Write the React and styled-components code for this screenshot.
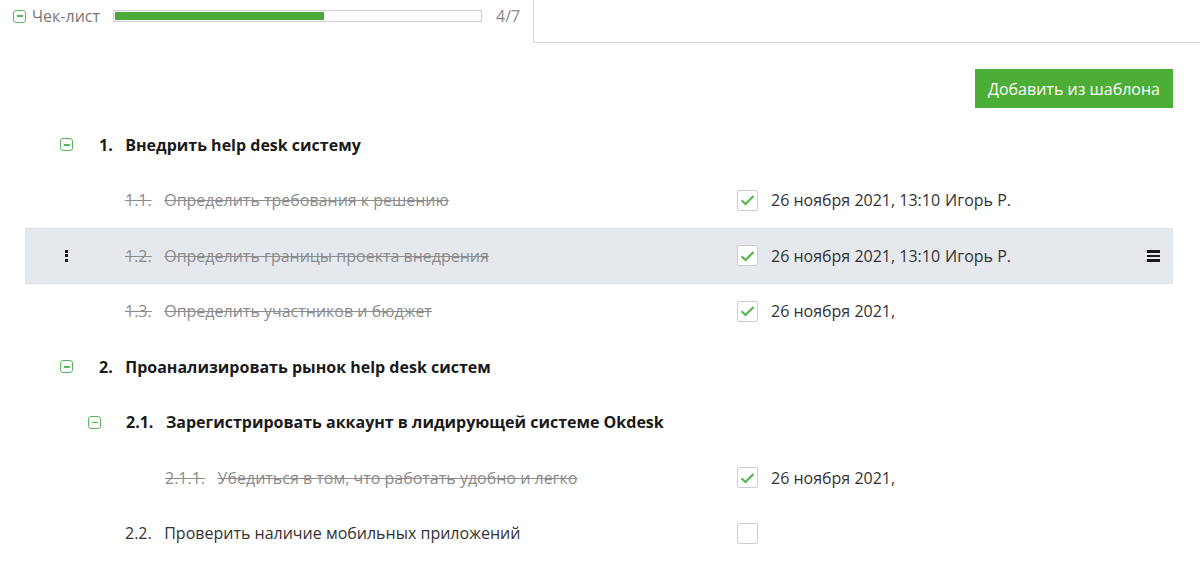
import React from 'react';
import styled, { createGlobalStyle } from 'styled-components';

const GlobalStyle = createGlobalStyle`
  html, body {
    margin: 0;
    padding: 0;
    background: #fff;
  }
  body {
    font-family: "Open Sans", "Liberation Sans", sans-serif;
    color: #333;
  }
`;

const Page = styled.div`
  width: 1200px;
  height: 566px;
  overflow: hidden;
`;

const Header = styled.div`
  display: flex;
  align-items: flex-start;
`;

const HeaderMain = styled.div`
  width: 533px;
  box-sizing: border-box;
  display: flex;
  align-items: center;
  padding: 8px 0 0 13px;
`;

const HeaderTab = styled.div`
  flex: 1;
  height: 42px;
  border-left: 1px solid #d3d9e2;
  border-bottom: 1px solid #d3d9e2;
`;

const Toggle = styled.span`
  width: 13px;
  height: 13px;
  box-sizing: border-box;
  border: 1.5px solid #5cb85c;
  border-radius: 3px;
  display: inline-flex;
  align-items: center;
  justify-content: center;
  flex-shrink: 0;
  margin-right: ${p => p.$gap || 26}px;

  &::after {
    content: '';
    width: 6px;
    height: 1.5px;
    background: #5cb85c;
  }
`;

const Label = styled.span`
  width: 81px;
  font-size: 16px;
  color: #777;
  line-height: 16px;
`;

const Progress = styled.div`
  width: 369px;
  height: 12px;
  box-sizing: border-box;
  border: 1px solid #c9cfd8;
  background: #fff;
  padding: 1px;
`;

const ProgressFill = styled.div`
  height: 100%;
  background: #4aaa36;
`;

const Count = styled.span`
  margin-left: 14px;
  font-size: 16px;
  color: #888;
  line-height: 16px;
`;

const Content = styled.div`
  padding: 0 27px 0 25px;
`;

const Toolbar = styled.div`
  display: flex;
  justify-content: flex-end;
  margin: 26px 0 9px;
`;

const Button = styled.button`
  width: 198px;
  height: 39px;
  border: none;
  background: #4cae36;
  color: #fff;
  font-family: "Open Sans", "Liberation Sans", sans-serif;
  font-size: 16px;
  padding: 0;
  cursor: pointer;
`;

const Row = styled.div`
  position: relative;
  height: 55.5px;
  box-sizing: border-box;
  display: grid;
  grid-template-columns: 712px 1fr 40px;
  align-items: center;
  background: ${p => (p.$active ? '#e5e8ed' : 'transparent')};
  box-shadow: ${p => (p.$active ? 'inset 0 1px 0 #dde1e8, inset 0 -1px 0 #dde1e8' : 'none')};
`;

const TitleCell = styled.div`
  display: flex;
  align-items: center;
  padding-left: ${p => p.$indent}px;
  font-size: 16px;
  line-height: 20px;
  white-space: nowrap;
`;

const Num = styled.span`
  margin-right: 12.5px;
  font-weight: ${p => (p.$bold ? 700 : 400)};
  color: ${p => (p.$done ? '#8c8c8c' : p.$bold ? '#1a1a1a' : '#333')};
  text-decoration: ${p => (p.$done ? 'line-through' : 'none')};
`;

const Title = styled.span`
  font-weight: ${p => (p.$bold ? 700 : 400)};
  color: ${p => (p.$done ? '#8c8c8c' : p.$bold ? '#1a1a1a' : '#333')};
  text-decoration: ${p => (p.$done ? 'line-through' : 'none')};
`;

const Kebab = styled.span`
  position: absolute;
  left: 40px;
  top: 50%;
  transform: translateY(-50%);
  display: flex;
  flex-direction: column;
  gap: 1.5px;

  & > i {
    width: 3px;
    height: 3px;
    background: #1a1a1a;
  }
`;

const MetaCell = styled.div`
  display: flex;
  align-items: center;
  font-size: 16px;
  color: #333;
  white-space: nowrap;
`;

const Check = styled.span`
  width: 21px;
  height: 21px;
  box-sizing: border-box;
  border: 1px solid #c9ced7;
  border-radius: 2px;
  background: #fff;
  display: inline-flex;
  align-items: center;
  justify-content: center;
  margin-right: 13px;
`;

const Author = styled.span`
  margin-left: 5px;
`;

const MenuCell = styled.div`
  display: flex;
  justify-content: center;
`;

const Burger = styled.span`
  display: flex;
  flex-direction: column;
  gap: 2px;

  & > i {
    width: 13px;
    height: 2.5px;
    background: #1a1a1a;
  }
`;

const CheckMark = () => (
  <svg width="15" height="12" viewBox="0 0 15 12">
    <path d="M1.5 6.3 L5.5 10 L13.5 2" fill="none" stroke="#55b552" strokeWidth="2.2" />
  </svg>
);

const items = [
  { num: '1.', title: 'Внедрить help desk систему', heading: true, indent: 35 },
  { num: '1.1.', title: 'Определить требования к решению', done: true, indent: 100, date: '26 ноября 2021, 13:10', author: 'Игорь Р.' },
  { num: '1.2.', title: 'Определить границы проекта внедрения', done: true, indent: 100, date: '26 ноября 2021, 13:10', author: 'Игорь Р.', active: true },
  { num: '1.3.', title: 'Определить участников и бюджет', done: true, indent: 100, date: '26 ноября 2021,' },
  { num: '2.', title: 'Проанализировать рынок help desk систем', heading: true, indent: 35 },
  { num: '2.1.', title: 'Зарегистрировать аккаунт в лидирующей системе Okdesk', heading: true, indent: 63, gap: 25 },
  { num: '2.1.1.', title: 'Убедиться в том, что работать удобно и легко', done: true, indent: 140, date: '26 ноября 2021,' },
  { num: '2.2.', title: 'Проверить наличие мобильных приложений', indent: 100, checkbox: true },
];

const ChecklistRow = ({ item }) => (
  <Row $active={item.active}>
    {item.active && (
      <Kebab><i /><i /><i /></Kebab>
    )}
    <TitleCell $indent={item.indent}>
      {item.heading && <Toggle $gap={item.gap} />}
      <Num $bold={item.heading} $done={item.done}>{item.num}</Num>
      <Title $bold={item.heading} $done={item.done}>{item.title}</Title>
    </TitleCell>
    <MetaCell>
      {(item.done || item.checkbox) && (
        <Check>{item.done && <CheckMark />}</Check>
      )}
      {item.date && <span>{item.date}</span>}
      {item.author && <Author>{item.author}</Author>}
    </MetaCell>
    <MenuCell>
      {item.active && (
        <Burger><i /><i /><i /></Burger>
      )}
    </MenuCell>
  </Row>
);

export default function App() {
  const done = 4;
  const total = 7;
  return (
    <Page>
      <GlobalStyle />
      <Header>
        <HeaderMain>
          <Toggle $gap={6} />
          <Label>Чек-лист</Label>
          <Progress>
            <ProgressFill style={{ width: `${(done / total) * 100}%` }} />
          </Progress>
          <Count>{done}/{total}</Count>
        </HeaderMain>
        <HeaderTab />
      </Header>
      <Content>
        <Toolbar>
          <Button>Добавить из шаблона</Button>
        </Toolbar>
        {items.map(item => (
          <ChecklistRow key={item.num} item={item} />
        ))}
      </Content>
    </Page>
  );
}
